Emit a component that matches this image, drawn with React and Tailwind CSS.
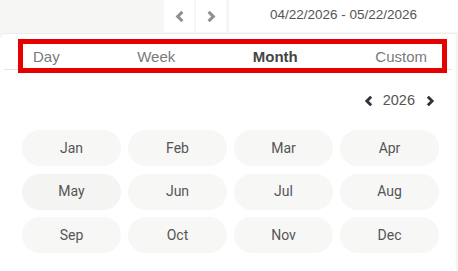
import React from 'react';

const months = ['Jan', 'Feb', 'Mar', 'Apr', 'May', 'Jun', 'Jul', 'Aug', 'Sep', 'Oct', 'Nov', 'Dec'];
const tabs = ['Day', 'Week', 'Month', 'Custom'];

const Chevron = ({ dir = 'left', className = '', stroke = 3 }) => (
  <svg viewBox="0 0 10 12" className={className} fill="none" stroke="currentColor" strokeWidth={stroke} strokeLinecap="square" strokeLinejoin="miter">
    {dir === 'left' ? <polyline points="7,2 3,6 7,10" /> : <polyline points="3,2 7,6 3,10" />}
  </svg>
);

export default function App() {
  return (
    <div className="w-[458px] h-[271px] overflow-hidden bg-[#f6f6f5] font-['Liberation_Sans',Arial,sans-serif]">
      {/* Top strip */}
      <div className="flex h-[32px]">
        <div className="w-[164px]" />
        <button className="w-[30px] bg-white flex items-center justify-center text-[#8f8f8f]">
          <Chevron dir="left" className="w-[9px] h-[11px]" stroke={3.4} />
        </button>
        <div className="w-[2px]" />
        <button className="w-[30px] bg-white flex items-center justify-center text-[#8f8f8f]">
          <Chevron dir="right" className="w-[9px] h-[11px]" stroke={3.4} />
        </button>
        <div className="w-[3px]" />
        <div className="flex-1 bg-white flex items-center justify-center text-[13.5px] text-[#555] pb-[1px]">
          04/22/2026 - 05/22/2026
        </div>
      </div>

      {/* Panel */}
      <div className="relative mt-[1px] mr-[2px] h-[238px] bg-white rounded-tl-[6px] rounded-tr-[3px] border-t border-[#ececec]">
        <div className="mx-[4px] h-[36px] border-b border-[#e3e3e3] flex items-end justify-between pl-[29px] pr-[25px] pb-[4px]">
          {tabs.map((t) => (
            <span
              key={t}
              className={t === 'Month' ? 'text-[15px] leading-[17px] font-bold text-[#444]' : 'text-[15px] leading-[17px] text-[#7a7a7a]'}
            >
              {t}
            </span>
          ))}
        </div>

        {/* highlight box */}
        <div className="absolute left-[18px] top-[5px] w-[429px] h-[34px] border-[5px] border-[#e60000] pointer-events-none" />

        {/* Year nav */}
        <div className="flex justify-end items-center h-[20px] mt-[21px] pr-[21px] text-[#333]">
          <Chevron dir="left" className="w-[9px] h-[10px]" stroke={3.4} />
          <span className="ml-[10px] mr-[11px] text-[14.5px] text-[#555]">2026</span>
          <Chevron dir="right" className="w-[9px] h-[10px]" stroke={3.4} />
        </div>

        {/* Months */}
        <div className="grid grid-cols-4 gap-x-[7px] gap-y-[7.5px] w-[417px] ml-[22px] mt-[19px] font-['Roboto',sans-serif]">
          {months.map((m) => (
            <div
              key={m}
              className={`h-[36px] rounded-full flex items-center justify-center text-[14px] text-[#555] ${m === 'May' ? 'bg-[#f4f4f3]' : 'bg-[#f7f7f6]'}`}
            >
              {m}
            </div>
          ))}
        </div>
      </div>
    </div>
  );
}
